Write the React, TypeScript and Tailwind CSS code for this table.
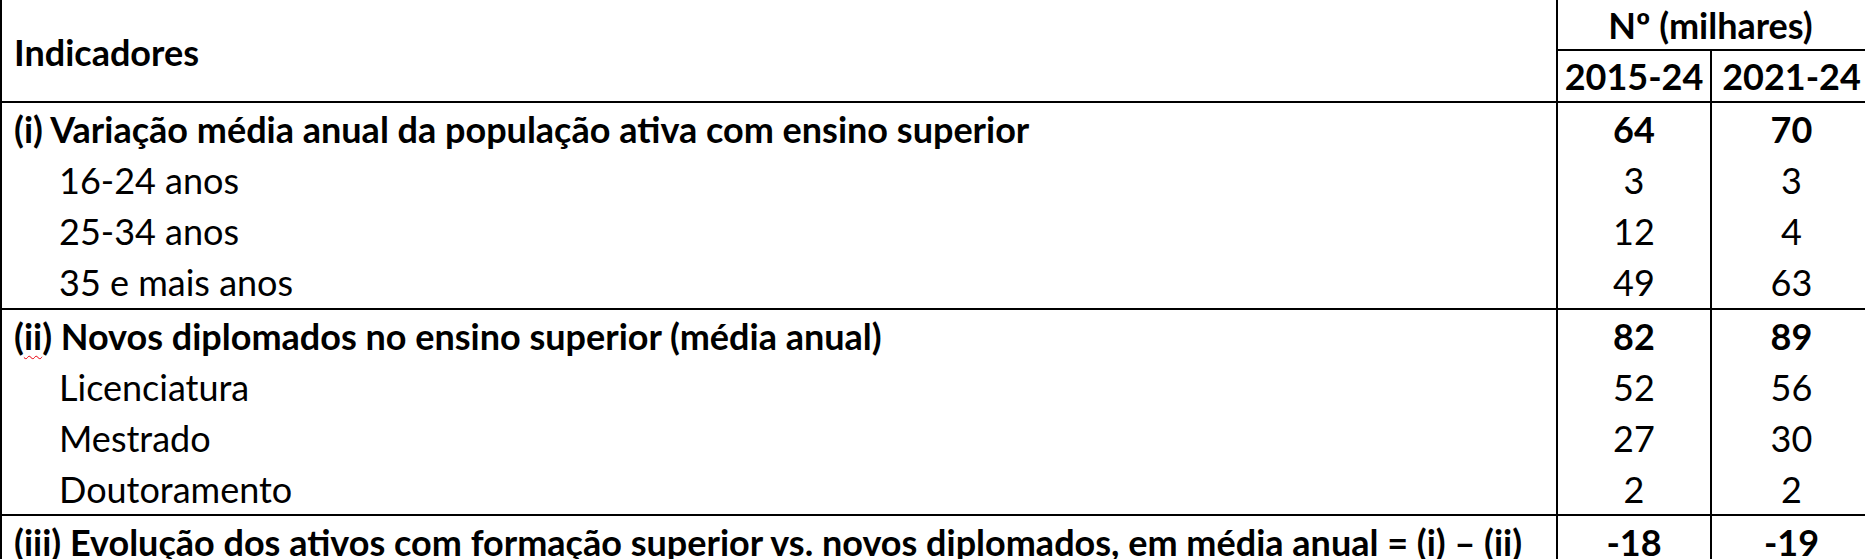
import React from 'react';

interface Row {
  label: React.ReactNode;
  a: string;
  b: string;
  bold?: boolean;
}

const Squiggle = ({ children }: { children: React.ReactNode }) => (
  <span className="underline decoration-wavy decoration-red-600 decoration-1 underline-offset-[5px]">
    {children}
  </span>
);

const groupOne: Row[] = [
  { label: '(i) Variação média anual da população ativa com ensino superior', a: '64', b: '70', bold: true },
  { label: '16-24 anos', a: '3', b: '3' },
  { label: '25-34 anos', a: '12', b: '4' },
  { label: '35 e mais anos', a: '49', b: '63' },
];

const groupTwo: Row[] = [
  {
    label: (
      <>
        (<Squiggle>ii</Squiggle>) Novos diplomados no ensino superior (média anual)
      </>
    ),
    a: '82',
    b: '89',
    bold: true,
  },
  { label: 'Licenciatura', a: '52', b: '56' },
  { label: 'Mestrado', a: '27', b: '30' },
  { label: 'Doutoramento', a: '2', b: '2' },
];

function TableRow({ row, height }: { row: Row; height: string }) {
  return (
    <div className={`flex ${height} ${row.bold ? 'font-bold' : ''}`}>
      <div className={`w-[1554px] flex items-center whitespace-nowrap ${row.bold ? 'pl-[12px]' : 'pl-[57px]'}`}>
        {row.label}
      </div>
      <div className="w-[154px] border-l-2 border-black flex items-center justify-center">{row.a}</div>
      <div className="w-[161px] border-l-2 border-black flex items-center justify-center">{row.b}</div>
    </div>
  );
}

export default function App() {
  return (
    <div className="w-[1865px] h-[559px] overflow-hidden bg-white text-black text-[36px] leading-none font-['Lato','Liberation_Sans',sans-serif]">
      <div className="w-[1871px] border-l-2 border-black">
        <header className="flex h-[103px] border-b-2 border-black font-bold">
          <div className="w-[1554px] flex items-center pl-[12px] pt-[2px]">Indicadores</div>
          <div className="w-[315px] border-l-2 border-black flex flex-col">
            <div className="h-[51px] border-b-2 border-black flex items-center justify-center pr-[8px]">
              Nº (milhares)
            </div>
            <div className="flex flex-1">
              <div className="w-[152px] flex items-center justify-center">2015-24</div>
              <div className="flex-1 border-l-2 border-black flex items-center justify-center">2021-24</div>
            </div>
          </div>
        </header>
        <section className="border-b-2 border-black">
          {groupOne.map((row, i) => (
            <TableRow key={i} row={row} height="h-[51.25px]" />
          ))}
        </section>
        <section className="border-b-2 border-black">
          {groupTwo.map((row, i) => (
            <TableRow key={i} row={row} height="h-[51px]" />
          ))}
        </section>
        <TableRow
          height="h-[51px]"
          row={{
            label: (
              <>
                (<Squiggle>iii</Squiggle>) Evolução dos ativos com formação superior vs. novos diplomados, em média anual = (i) – (
                <Squiggle>ii</Squiggle>)
              </>
            ),
            a: '-18',
            b: '-19',
            bold: true,
          }}
        />
      </div>
    </div>
  );
}
